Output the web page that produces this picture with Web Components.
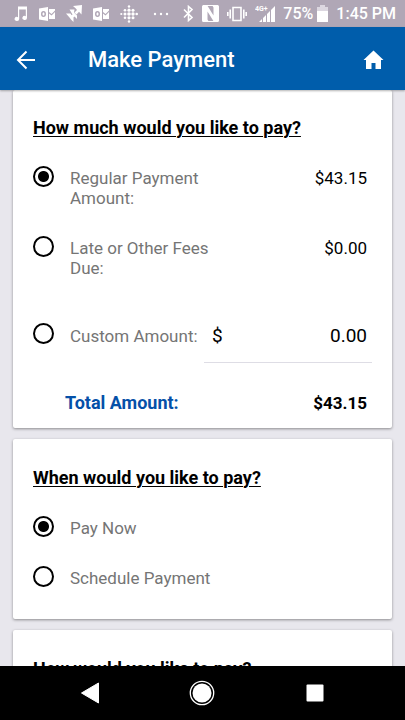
<!DOCTYPE html>
<html lang="en">
<head>
<meta charset="utf-8">
<meta name="viewport" content="width=device-width, initial-scale=1">
<title>Make Payment</title>
<style>
  body { margin: 0; background: #e8e7ed; font-family: Roboto, "Liberation Sans", sans-serif; color: #000; }
</style>
</head>
<body>
<payment-app></payment-app>

<script>
const define = (name, html, setup) => {
  const template = document.createElement('template');
  template.innerHTML = html;
  customElements.define(name, class extends HTMLElement {
    constructor() {
      super();
      this.attachShadow({ mode: 'open' }).append(template.content.cloneNode(true));
    }
    connectedCallback() { if (setup) setup(this, this.shadowRoot); }
  });
};

const outlook = `<svg width="16" height="14" viewBox="0 0 16 14" aria-hidden="true">
  <path fill="#fff" fill-rule="evenodd" d="M0 1.5 9 0v14L0 12.5zM4.5 4C2.8 4 2 5.300 2 7s.8 3 2.500 3S7 8.700 7 7 6.200 4 4.500 4zm0 1.500c.8 0 1 .7 1 1.500s-.2 1.500-1 1.500-1-.7-1-1.500.2-1.500 1-1.500z"/>
  <path fill="#fff" d="M10 2h6v1.500L12.500 7 10 5zM10 6.500l2.500 2L16 5v7h-6z"/></svg>`;

define('status-bar', `
<style>
  :host { display: flex; align-items: center; justify-content: space-between; height: 27px; padding: 0 9px 0 14px; background: #b0a7b6; color: #fff; font-size: 16px; line-height: 20px; font-weight: 500; flex: none; box-sizing: border-box; white-space: nowrap; }
  .group { display: flex; align-items: center; gap: 11px; }
  .system { gap: 8px; }
  .power { display: flex; align-items: center; gap: 4px; }
  svg { display: block; flex: none; }
</style>
<div class="group">
  <svg width="14" height="15" viewBox="0 0 14 15" aria-hidden="true"><path fill="#fff" d="M4 .5h9V12a2.300 2 0 1 1-1.200-1.800V3.500H5.200V13A2.300 2 0 1 1 4 11.200z"/></svg>
  ${outlook}
  <svg width="16" height="17" viewBox="0 0 16 17" aria-hidden="true"><path fill="#fff" d="M7 1l9-1-.5 9.500-2.500-2.700-2.500 2.700-2-2L11 5 9.800 3.600zM3.500 4.500h5L8 7.500l3 3v3.500L8.500 11.500 6.500 13.500l-2-2 2-2zM0 8.500h4.500l3 4.500v4L5 14.500l-1.500-2z"/></svg>
  ${outlook}
  <svg width="18" height="18" viewBox="0 0 18 18" aria-hidden="true"><g fill="#fff"><circle cx="9" cy="1.500" r="1.200"/><circle cx="9" cy="5.200" r="1.600"/><circle cx="9" cy="9" r="1.800"/><circle cx="9" cy="12.800" r="1.600"/><circle cx="9" cy="16.500" r="1.200"/><circle cx="5" cy="5.200" r="1.300"/><circle cx="5" cy="9" r="1.500"/><circle cx="5" cy="12.800" r="1.300"/><circle cx="13" cy="5.200" r="1.500"/><circle cx="13" cy="9" r="1.700"/><circle cx="13" cy="12.800" r="1.500"/><circle cx="1.300" cy="9" r="1.100"/><circle cx="16.700" cy="9" r="1.300"/></g></svg>
  <svg width="26" height="4" viewBox="0 0 26 4" aria-hidden="true"><g fill="#fff"><circle cx="6" cy="2" r="1.200"/><circle cx="12" cy="2" r="1.200"/><circle cx="18" cy="2" r="1.200"/></g></svg>
</div>
<div class="group system">
  <svg width="11" height="17" viewBox="0 0 11 17" aria-hidden="true"><path fill="none" stroke="#fff" stroke-width="1.600" d="M1 4.500l8 8-3.500 3V1.500l3.500 3-8 8"/></svg>
  <svg width="17" height="17" viewBox="0 0 17 17" aria-hidden="true"><path fill="#fff" d="M1.500 0H5l6.500 10.500V2.500L10 0h5.500Q17 0 17 1.500v14q0 1.500-1.500 1.500H12L5.500 6.500v8L7 17H1.500Q0 17 0 15.500v-14Q0 0 1.500 0z"/><path fill="none" stroke="#fff" stroke-width="1" d="M1 .5h15M1 16.500h15"/></svg>
  <svg width="20" height="16" viewBox="0 0 20 16" aria-hidden="true"><path fill="none" stroke="#fff" stroke-width="1.600" d="M6 1.500h8v13H6zM3.200 3.500v9M16.800 3.500v9M.8 6v4M19.200 6v4"/></svg>
  <svg width="20" height="18" viewBox="0 0 20 18" aria-hidden="true"><text x="0" y="6" fill="#fff" font-size="7" font-weight="700">4G+</text><path fill="#fff" d="M4 17l3-3v3zM8 13l3-3v7H8zM12 9l3-3v11h-3zM16 5l4-4v16h-4z"/></svg>
  <div class="power"><span>75%</span>
  <svg width="11" height="17" viewBox="0 0 11 17" aria-hidden="true"><path fill="#dcd7e0" d="M3 0h5v2h3v4H0V2h3z"/><path fill="#fff" d="M0 6h11v11H0z"/></svg></div>
  <span>1:45 PM</span>
</div>`);

define('app-header', `
<style>
  :host { display: flex; align-items: center; height: 63px; padding: 2px 21px 0 16px; background: #005dab; color: #fff; flex: none; box-sizing: border-box; position: relative; z-index: 1; box-shadow: 0 1px 2px rgba(0,0,0,.3); }
  button, a { display: block; margin: 0; padding: 0; border: 0; background: none; color: inherit; }
  h1 { flex: 1; margin: 0 0 0 52px; font-size: 22px; line-height: 28px; font-weight: 500; }
  svg { display: block; }
</style>
<button type="button" aria-label="Back"><svg width="20" height="20" viewBox="0 0 20 20"><path fill="none" stroke="#fff" stroke-width="2" d="M19 10H2.500M10.500 1.500L2 10l8.500 8.500"/></svg></button>
<h1><slot></slot></h1>
<a href="#home" aria-label="Home"><svg width="21" height="20" viewBox="0 0 21 20"><path fill="#fff" d="M10.500.5L20.500 10H18v9h-5.500v-6h-4v6H3v-9H.5z"/></svg></a>`);

define('payment-card', `
<style>
  :host { display: block; padding: 27px 20px 31px; background: #fff; border-radius: 2px; box-shadow: 0 1px 3px rgba(0,0,0,.4); }
  h2 { margin: 0 0 26px; font-size: 18px; line-height: 24px; font-weight: 700; text-decoration: underline; text-decoration-thickness: 1px; text-underline-offset: 2px; }
  .rows { display: flex; flex-direction: column; gap: 28px; }
</style>
<section><h2><slot name="title"></slot></h2><div class="rows"><slot></slot></div></section>`,
(host) => host.addEventListener('option-chosen', (e) => {
  host.querySelectorAll('payment-option').forEach((o) => {
    if (o !== e.target) o.shadowRoot.querySelector('input').checked = false;
  });
}));

define('payment-option', `
<style>
  :host { display: flex; align-items: flex-start; font-size: 17px; line-height: 20px; }
  input { appearance: none; flex: none; width: 21px; height: 21px; margin: 0 16px 0 0; border: 2px solid #000; border-radius: 50%; background: #fff; }
  input:checked { background: radial-gradient(circle, #000 5px, #fff 6px); }
  label { flex: 0 1 144px; padding-top: 2px; color: #757575; }
  .value { flex: 1; padding: 2px 5px 0 0; text-align: right; }
  :host([field]) { align-items: center; padding-top: 2px; }
  :host([field]) input { margin-bottom: 4px; }
  :host([field]) label { flex-basis: 134px; padding: 0; }
  :host([field]) .value { padding: 0; min-width: 0; }
</style>
<input type="radio" id="choice"><label for="choice"><slot></slot></label><div class="value"><slot name="value"></slot></div>`,
(host, root) => {
  const input = root.querySelector('input');
  input.checked = host.hasAttribute('checked');
  input.addEventListener('change', () => host.dispatchEvent(new CustomEvent('option-chosen', { bubbles: true })));
});

define('amount-field', `
<style>
  :host { display: flex; align-items: center; box-sizing: border-box; height: 55px; padding: 2px 5px 0 8px; border-bottom: 1px solid #dedde5; font-size: 19px; line-height: 24px; }
  input { flex: 1; min-width: 0; width: 0; margin: 0; padding: 0; border: 0; background: none; font: inherit; color: inherit; text-align: right; outline: none; }
</style>
<label for="amount">$</label><input id="amount" type="text" inputmode="decimal" value="0.00" aria-label="Custom amount in dollars">`);

define('payment-total', `
<style>
  :host { display: flex; justify-content: space-between; margin-top: 2px; padding: 0 5px 0 32px; font-size: 17px; line-height: 20px; font-weight: 700; }
  .name { color: #0550a8; font-size: 18px; }
</style>
<span class="name"><slot></slot></span><slot name="value"></slot>`);

define('system-nav', `
<style>
  :host { display: flex; justify-content: space-around; align-items: center; height: 54px; padding: 0 34px; background: #000; flex: none; box-sizing: border-box; }
  button { display: block; margin: 0; padding: 0; border: 0; background: none; }
  svg { display: block; }
</style>
<button type="button" aria-label="Back"><svg width="26" height="26" viewBox="0 0 26 26"><path fill="#fff" stroke="#fff" stroke-linejoin="round" d="M21.500 3v20L4.500 13z"/></svg></button>
<button type="button" aria-label="Home"><svg width="26" height="26" viewBox="0 0 26 26"><circle cx="13" cy="13" r="11.700" fill="none" stroke="#fff" stroke-width="1.300"/><circle cx="13" cy="13" r="9.500" fill="#fff"/></svg></button>
<button type="button" aria-label="Recent apps"><svg width="26" height="26" viewBox="0 0 26 26"><rect x="4.500" y="4.500" width="17" height="17" rx="1" fill="#fff"/></svg></button>`);

define('payment-app', `
<style>
  :host { display: flex; flex-direction: column; height: 100vh; overflow: hidden; }
  main { flex: 1; min-height: 0; overflow: hidden; display: flex; flex-direction: column; gap: 11px; padding: 0 13px; }
  payment-card { flex: none; }
  .amounts { padding-top: 26px; padding-bottom: 15px; }
</style>
<status-bar></status-bar>
<app-header>Make Payment</app-header>
<main>
  <payment-card class="amounts"><span slot="title">How much would you like to pay?</span>
    <payment-option checked>Regular Payment Amount:<span slot="value">$43.15</span></payment-option>
    <payment-option>Late or Other Fees Due:<span slot="value">$0.00</span></payment-option>
    <payment-option field>Custom Amount:<amount-field slot="value"></amount-field></payment-option>
    <payment-total>Total Amount:<span slot="value">$43.15</span></payment-total>
  </payment-card>
  <payment-card><span slot="title">When would you like to pay?</span>
    <payment-option checked>Pay Now</payment-option>
    <payment-option>Schedule Payment</payment-option>
  </payment-card>
  <payment-card><span slot="title">How would you like to pay?</span></payment-card>
</main>
<system-nav></system-nav>`);
</script>
</body>
</html>
